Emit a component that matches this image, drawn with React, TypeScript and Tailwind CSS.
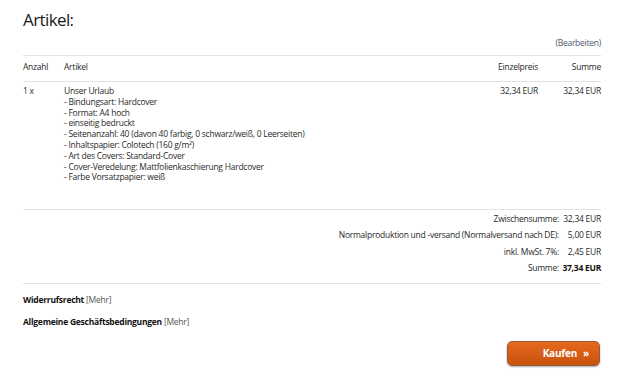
import React from 'react';

const details = [
    'Unser Urlaub',
    '- Bindungsart: Hardcover',
    '- Format: A4 hoch',
    '- einseitig bedruckt',
    '- Seitenanzahl: 40 (davon 40 farbig, 0 schwarz/weiß, 0 Leerseiten)',
    '- Inhaltspapier: Colotech (160 g/m²)',
    '- Art des Covers: Standard-Cover',
    '- Cover-Veredelung: Mattfolienkaschierung Hardcover',
    '- Farbe Vorsatzpapier: weiß',
];

const totals = [
    { label: 'Zwischensumme:', value: '32,34 EUR' },
    { label: 'Normalproduktion und -versand (Normalversand nach DE):', value: '5,00 EUR' },
    { label: 'inkl. MwSt. 7%:', value: '2,45 EUR' },
    { label: 'Summe:', value: '37,34 EUR', bold: true },
];

export default function App() {
    return (
        <div className="min-h-screen bg-white pl-[23px] pr-[24px] text-[8.5px] leading-[11px] tracking-[-0.25px] text-[#2a2a2a] font-['Open_Sans',sans-serif]">
            <h1 className="pt-[8px] text-[17px] leading-[24px] tracking-[-0.6px] text-[#1a1a1a]">Artikel:</h1>

            <div className="mt-[5px] text-right text-[#4a5a70]">(Bearbeiten)</div>

            {/* Kopfzeile */}
            <div className="mt-[7px] flex border-t border-b border-[#e2e2e2] pt-[5px] pb-[9px]">
                <div className="w-[41px]">Anzahl</div>
                <div className="flex-1">Artikel</div>
                <div className="w-[70px] text-right">Einzelpreis</div>
                <div className="w-[63px] text-right">Summe</div>
            </div>

            {/* Artikelzeile */}
            <div className="flex pt-[4px] pb-[26px] border-b border-[#e2e2e2] leading-[10.8px]">
                <div className="w-[41px]">1 x</div>
                <div className="flex-1">
                    {details.map((d) => (
                        <div key={d}>{d}</div>
                    ))}
                </div>
                <div className="w-[70px] text-right">32,34 EUR</div>
                <div className="w-[63px] text-right">32,34 EUR</div>
            </div>

            {/* Summen */}
            <div className="flex flex-col gap-[5.5px] pt-[2.5px] pb-[9.5px] border-b border-[#e2e2e2]">
                {totals.map((t) => (
                    <div key={t.label} className="flex justify-end whitespace-nowrap">
                        <div className="text-right">{t.label}</div>
                        <div className={`w-[42px] text-right ${t.bold ? 'font-bold text-[#111]' : ''}`}>{t.value}</div>
                    </div>
                ))}
            </div>

            <div className="pt-[10px] flex flex-col gap-[11px]">
                <div>
                    <span className="font-bold text-[#111]">Widerrufsrecht</span>{' '}
                    <span className="text-[#555]">[Mehr]</span>
                </div>
                <div>
                    <span className="font-bold text-[#111]">Allgemeine Geschäftsbedingungen</span>{' '}
                    <span className="text-[#555]">[Mehr]</span>
                </div>
            </div>

            <div className="mt-[14px] flex justify-end pr-[1px]">
                <button className="h-[25px] w-[93px] rounded-[5px] border border-[#9a5a3a] bg-gradient-to-b from-[#e5691d] to-[#c9520c] pr-[10px] text-right text-[10px] font-bold tracking-[-0.2px] text-white shadow-[0_1px_2px_rgba(0,0,0,0.35)]">
                    Kaufen<span className="ml-[6px]">»</span>
                </button>
            </div>
        </div>
    );
}
